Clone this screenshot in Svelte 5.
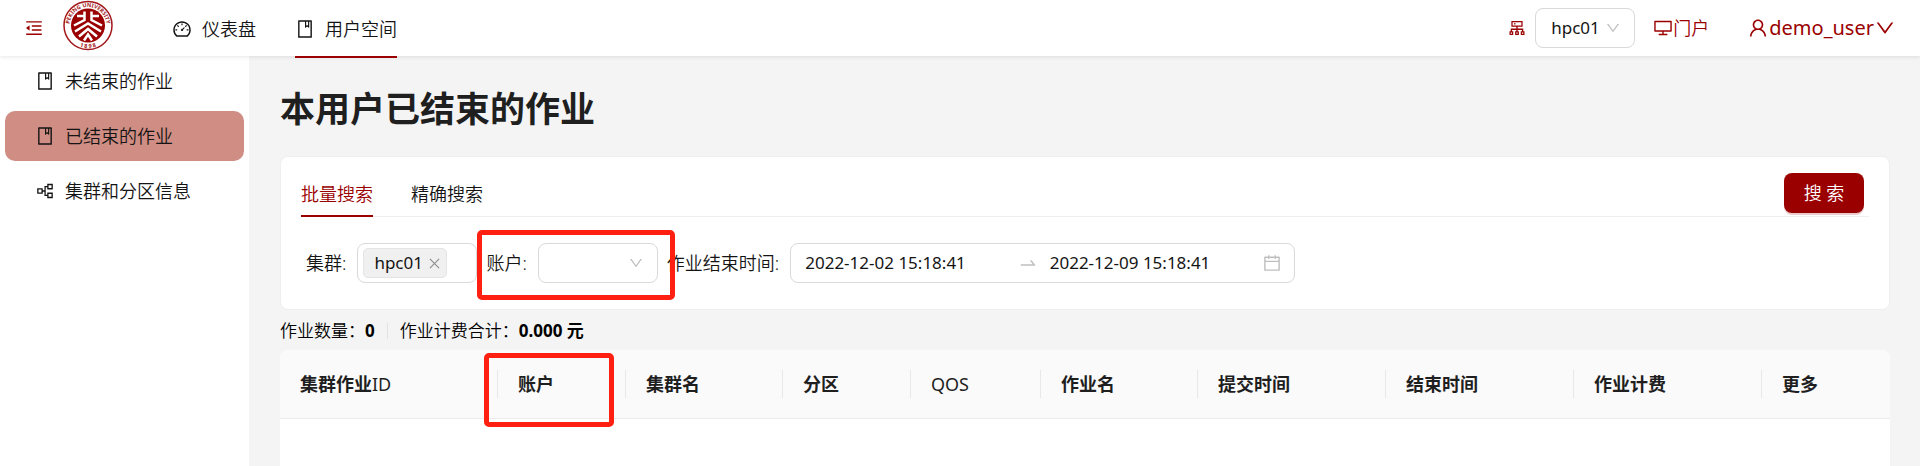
<script>
  const icons = {
    fold: 'M408 442h480c4.4 0 8-3.6 8-8v-56c0-4.4-3.6-8-8-8H408c-4.4 0-8 3.6-8 8v56c0 4.4 3.6 8 8 8zm-8 204c0 4.4 3.6 8 8 8h480c4.4 0 8-3.6 8-8v-56c0-4.4-3.6-8-8-8H408c-4.4 0-8 3.6-8 8v56zm504-486H120c-4.4 0-8 3.6-8 8v56c0 4.4 3.6 8 8 8h784c4.4 0 8-3.6 8-8v-56c0-4.4-3.6-8-8-8zm0 632H120c-4.4 0-8 3.6-8 8v56c0 4.4 3.6 8 8 8h784c4.4 0 8-3.6 8-8v-56c0-4.4-3.6-8-8-8zM115.4 518.9L271.7 642c5.8 4.6 14.4.5 14.4-6.9V388.9c0-7.4-8.5-11.5-14.4-6.9L115.4 505.1a8.74 8.74 0 000 13.8z',
    dashboard: 'M924.8 385.6a446.7 446.7 0 00-96-142.4 446.7 446.7 0 00-142.4-96C631.1 123.8 572.5 112 512 112s-119.1 11.8-174.4 35.2a446.7 446.7 0 00-142.4 96 446.7 446.7 0 00-96 142.4C75.8 440.9 64 499.5 64 560c0 132.7 58.3 257.7 159.9 343.1l1.7 1.4c5.8 4.8 13.1 7.5 20.6 7.5h531.7c7.5 0 14.8-2.7 20.6-7.5l1.7-1.4C901.7 817.7 960 692.7 960 560c0-60.5-11.9-119.1-35.2-174.4zM761.4 836H262.6A371.12 371.12 0 01140 560c0-99.4 38.7-192.8 109-263 70.3-70.3 163.7-109 263-109 99.4 0 192.8 38.7 263 109 70.3 70.3 109 163.7 109 263 0 105.6-44.5 205.5-122.6 276zM623.5 421.5a8.03 8.03 0 00-11.3 0L527.7 506c-18.7-5-39.4-.2-54.1 14.5a55.95 55.95 0 000 79.2 55.95 55.95 0 0079.2 0 55.87 55.87 0 0014.5-54.1l84.5-84.5c3.1-3.1 3.1-8.2 0-11.3l-28.3-28.3zM490 320h44c4.4 0 8-3.6 8-8v-80c0-4.4-3.6-8-8-8h-44c-4.4 0-8 3.6-8 8v80c0 4.4 3.6 8 8 8zm260 218v44c0 4.4 3.6 8 8 8h80c4.4 0 8-3.6 8-8v-44c0-4.4-3.6-8-8-8h-80c-4.4 0-8 3.6-8 8zm12.7-197.2l-31.1-31.1a8.03 8.03 0 00-11.3 0l-56.6 56.6a8.03 8.03 0 000 11.3l31.1 31.1c3.1 3.1 8.2 3.1 11.3 0l56.6-56.6c3.1-3.1 3.1-8.2 0-11.3zm-458.6-31.1a8.03 8.03 0 00-11.3 0l-31.1 31.1a8.03 8.03 0 000 11.3l56.6 56.6c3.1 3.1 8.2 3.1 11.3 0l31.1-31.1c3.1-3.1 3.1-8.2 0-11.3l-56.6-56.6zM262 530h-80c-4.4 0-8 3.6-8 8v44c0 4.4 3.6 8 8 8h80c4.4 0 8-3.6 8-8v-44c0-4.4-3.6-8-8-8z',
    book: 'M832 64H192c-17.7 0-32 14.3-32 32v832c0 17.7 14.3 32 32 32h640c17.7 0 32-14.3 32-32V96c0-17.7-14.3-32-32-32zm-260 72h96v209.9L621.5 312 572 347.4V136zm220 752H232V136h280v296.9c0 3.3 1 6.6 3 9.3a15.9 15.9 0 0022.3 3.7l83.8-59.9 81.4 59.4c2.7 2 6 3.1 9.4 3.1 8.8 0 16-7.2 16-16V136h64v752z',
    partition: 'M640.6 429.8h257.1c7.9 0 14.3-6.4 14.3-14.3V158.3c0-7.9-6.4-14.3-14.3-14.3H640.6c-7.9 0-14.3 6.4-14.3 14.3v92.9H490.6c-3.9 0-7.1 3.2-7.1 7.1v221.5h-85.7v-96.5c0-7.9-6.4-14.3-14.3-14.3H126.3c-7.9 0-14.3 6.4-14.3 14.3v257.2c0 7.9 6.4 14.3 14.3 14.3h257.1c7.9 0 14.3-6.4 14.3-14.3V544h85.7v221.5c0 3.9 3.2 7.1 7.1 7.1h135.7v92.9c0 7.9 6.4 14.3 14.3 14.3h257.1c7.9 0 14.3-6.4 14.3-14.3v-257c0-7.9-6.4-14.3-14.3-14.3h-257c-7.9 0-14.3 6.4-14.3 14.3v100h-78.6v-393h78.6v100c0 7.9 6.4 14.3 14.3 14.3zm53.5-217.9h150V362h-150V211.9zM329.9 587h-150V437h150v150zm364.2 75.1h150v150.1h-150V662.1z',
    cluster: 'M888 680h-54V540H546v-92h238c8.8 0 16-7.2 16-16V168c0-8.8-7.2-16-16-16H240c-8.8 0-16 7.2-16 16v264c0 8.8 7.2 16 16 16h238v92H190v140h-54c-4.4 0-8 3.6-8 8v176c0 4.4 3.6 8 8 8h176c4.4 0 8-3.6 8-8V688c0-4.4-3.6-8-8-8h-54v-72h220v72h-54c-4.4 0-8 3.6-8 8v176c0 4.4 3.6 8 8 8h176c4.4 0 8-3.6 8-8V688c0-4.4-3.6-8-8-8h-54v-72h220v72h-54c-4.4 0-8 3.6-8 8v176c0 4.4 3.6 8 8 8h176c4.4 0 8-3.6 8-8V688c0-4.4-3.6-8-8-8zM256 805.3c0 1.5-1.2 2.7-2.7 2.7h-58.7c-1.5 0-2.7-1.2-2.7-2.7v-58.7c0-1.5 1.2-2.7 2.7-2.7h58.7c1.5 0 2.7 1.2 2.7 2.7v58.7zm288 0c0 1.5-1.2 2.7-2.7 2.7h-58.7c-1.5 0-2.7-1.2-2.7-2.7v-58.7c0-1.5 1.2-2.7 2.7-2.7h58.7c1.5 0 2.7 1.2 2.7 2.7v58.7zM288 384V216h448v168H288zm544 421.3c0 1.5-1.2 2.7-2.7 2.7h-58.7c-1.5 0-2.7-1.2-2.7-2.7v-58.7c0-1.5 1.2-2.7 2.7-2.7h58.7c1.5 0 2.7 1.2 2.7 2.7v58.7zM360 300a40 40 0 1080 0 40 40 0 10-80 0z',
    desktop: 'M928 140H96c-17.7 0-32 14.3-32 32v496c0 17.7 14.3 32 32 32h380v112H304c-8.8 0-16 7.2-16 16v48c0 4.4 3.6 8 8 8h432c4.4 0 8-3.6 8-8v-48c0-8.8-7.2-16-16-16H548V700h380c17.7 0 32-14.3 32-32V172c0-17.7-14.3-32-32-32zm-40 488H136V212h752v416z',
    user: 'M858.5 763.6a374 374 0 00-80.6-119.5 375.63 375.63 0 00-119.5-80.6c-.4-.2-.8-.3-1.2-.5C719.5 518 760 444.7 760 362c0-137-111-248-248-248S264 225 264 362c0 82.7 40.5 156 102.8 201.1-.4.2-.8.3-1.2.5-44.8 18.9-85 46-119.5 80.6a375.63 375.63 0 00-80.6 119.5A371.7 371.7 0 00136 901.8a8 8 0 008 8.2h60c4.4 0 7.9-3.5 8-7.8 2-77.2 33-149.5 87.8-204.3 56.7-56.7 132-87.9 212.2-87.9s155.5 31.2 212.2 87.9C779 752.7 810 825 812 902.2c.1 4.4 3.6 7.8 8 7.8h60a8 8 0 008-8.2c-1-47.8-10.9-94.3-29.5-138.2zM512 534c-45.9 0-89.1-17.9-121.6-50.4S340 407.9 340 362c0-45.9 17.9-89.1 50.4-121.6S466.1 190 512 190s89.1 17.9 121.6 50.4S684 316.1 684 362c0 45.9-17.9 89.1-50.4 121.6S557.9 534 512 534z',
    down: 'M884 256h-75c-5.1 0-9.9 2.5-12.9 6.6L512 654.2 227.9 262.6c-3-4.1-7.8-6.6-12.9-6.6h-75c-6.5 0-10.3 7.4-6.5 12.7l352.6 486.1c12.8 17.6 39 17.6 51.7 0l352.6-486.1c3.9-5.3.1-12.7-6.4-12.7z',
    arrow: 'M873.1 596.2l-164-208A32 32 0 00684 376h-64.8c-6.7 0-10.4 7.7-6.3 13l144.3 183H152c-4.4 0-8 3.6-8 8v60c0 4.4 3.6 8 8 8h695.9c26.8 0 41.7-30.8 25.2-51.8z',
    calendar: 'M880 184H712v-64c0-4.4-3.6-8-8-8h-56c-4.4 0-8 3.6-8 8v64H384v-64c0-4.4-3.6-8-8-8h-56c-4.4 0-8 3.6-8 8v64H144c-17.7 0-32 14.3-32 32v664c0 17.7 14.3 32 32 32h736c17.7 0 32-14.3 32-32V216c0-17.7-14.3-32-32-32zm-40 656H184V460h656v380zM184 392V256h128v48c0 4.4 3.6 8 8 8h56c4.4 0 8-3.6 8-8v-48h256v48c0 4.4 3.6 8 8 8h56c4.4 0 8-3.6 8-8v-48h128v136H184z'
  };

  const sideItems = [
    { label: '未结束的作业', icon: 'book' },
    { label: '已结束的作业', icon: 'book', active: true },
    { label: '集群和分区信息', icon: 'partition' }
  ];

  const columns = [
    { title: '集群作业ID', width: 218 },
    { title: '账户', width: 128, marked: true },
    { title: '集群名', width: 157 },
    { title: '分区', width: 128 },
    { title: 'QOS', width: 130 },
    { title: '作业名', width: 157 },
    { title: '提交时间', width: 188 },
    { title: '结束时间', width: 188 },
    { title: '作业计费', width: 188 },
    { title: '更多', width: 128 }
  ];
  const total = columns.reduce((sum, c) => sum + c.width, 0);

  let clusters = $state(['hpc01']);
  let tab = $state('批量搜索');
  let start = $state('2022-12-02 15:18:41');
  let end = $state('2022-12-09 15:18:41');
</script>

{#snippet icon(name)}
  <svg class="icon" viewBox="0 0 1024 1024" aria-hidden="true"><path d={icons[name]} /></svg>
{/snippet}

<div class="page">
  <header>
    <button class="fold" aria-label="fold">{@render icon('fold')}</button>
    <a class="logo" href="#home" aria-label="home">
      <svg viewBox="0 0 100 100">
        <circle cx="50" cy="50" r="48" fill="#fff" stroke="#a3171b" stroke-width="3" />
        <circle cx="50" cy="50" r="34" fill="#9b0000" />
        <path id="arc" d="M19.4 70.7A37 37 0 1 1 80.6 70.7" fill="none" />
        <text font-size="11" font-weight="700" fill="#a3171b">
          <textPath href="#arc" startOffset="50%" text-anchor="middle">PEKING UNIVERSITY</textPath>
        </text>
        <path id="arc-low" d="M25 87.4A45 45 0 0 0 75 87.4" fill="none" />
        <text font-size="11" font-weight="700" fill="#a3171b">
          <textPath href="#arc-low" startOffset="50%" text-anchor="middle">1 8 9 8</textPath>
        </text>
        <g fill="none" stroke="#fff" stroke-width="5">
          <path d="M43 22V39L22 50M43 31H28M57 22V39L78 50M57 31H72" />
          <path d="M24 62L50 46L76 62M32 72L50 57L68 72M42 80L50 68L58 80" />
        </g>
      </svg>
    </a>
    <nav class="top-nav">
      <a href="#dashboard">{@render icon('dashboard')}仪表盘</a>
      <a href="#user" class="current">{@render icon('book')}用户空间</a>
    </nav>
    <div class="tools">
      <span class="cluster-icon">{@render icon('cluster')}</span>
      <div class="select header-select">
        <select aria-label="cluster"><option>hpc01</option></select>
        {@render icon('down')}
      </div>
      <a class="portal" href="#portal">{@render icon('desktop')}门户</a>
      <button class="account">{@render icon('user')}demo_user{@render icon('down')}</button>
    </div>
  </header>

  <div class="body">
    <aside>
      {#each sideItems as item}
        <a href="#jobs" class:active={item.active}>{@render icon(item.icon)}{item.label}</a>
      {/each}
    </aside>

    <main>
      <h1>本用户已结束的作业</h1>

      <section class="card">
        <div class="tabs">
          {#each ['批量搜索', '精确搜索'] as name}
            <button class="tab" class:chosen={tab === name} onclick={() => (tab = name)}>{name}</button>
          {/each}
          <button class="search">搜 索</button>
        </div>

        <form>
          <div class="field">
            <label for="clusters">集群:</label>
            <div class="box multi">
              {#each clusters as c}
                <span class="tag">
                  {c}
                  <button type="button" aria-label="remove" onclick={() => (clusters = [])}>
                    <svg viewBox="0 0 12 12"><path d="M1 1L11 11M11 1L1 11" /></svg>
                  </button>
                </span>
              {/each}
              <input id="clusters" />
            </div>
          </div>
          <div class="field">
            <label for="account">账户:</label>
            <div class="select">
              <select id="account"><option></option></select>
              {@render icon('down')}
            </div>
            <div class="mark mark-field"></div>
          </div>
          <div class="field">
            <label for="start">作业结束时间:</label>
            <div class="box range">
              <input id="start" bind:value={start} />
              {@render icon('arrow')}
              <input aria-label="end" bind:value={end} />
              {@render icon('calendar')}
            </div>
          </div>
        </form>
      </section>

      <div class="stats">
        <span>作业数量：<strong>0</strong></span>
        <span class="divider"></span>
        <span>作业计费合计：<strong>0.000 元</strong></span>
      </div>

      <div class="table-wrap">
        <table>
          <colgroup>
            {#each columns as c}<col style="width: {(c.width / total) * 100}%" />{/each}
          </colgroup>
          <thead>
            <tr>
              {#each columns as c}
                <th class:latin={c.title === 'QOS'}>
                  {#if c.title.endsWith('ID')}{c.title.slice(0, -2)}<span class="latin">ID</span>{:else}{c.title}{/if}
                  {#if c.marked}<div class="mark mark-column"></div>{/if}
                </th>
              {/each}
            </tr>
          </thead>
        </table>
      </div>
    </main>
  </div>
</div>

<style>
  :global(body) {
    margin: 0;
  }
  .page {
    display: flex;
    flex-direction: column;
    min-height: 100vh;
    background: #f4f4f4;
    color: #141414;
    font-family: 'Noto Sans', 'Noto Sans CJK SC', sans-serif;
    font-size: 18px;
    font-weight: 350;
    line-height: 28px;
  }
  .page *,
  .page *::before,
  .page *::after {
    box-sizing: border-box;
  }
  button,
  input,
  select {
    margin: 0;
    padding: 0;
    border: 0;
    background: none;
    color: inherit;
    font: inherit;
  }
  button {
    cursor: pointer;
  }
  a {
    color: inherit;
    text-decoration: none;
  }
  .icon {
    flex: none;
    width: 20px;
    height: 20px;
    fill: currentColor;
  }

  header {
    position: relative;
    display: flex;
    align-items: center;
    height: 56px;
    padding: 0 24px;
    background: #fff;
    box-shadow: 0 1px 4px rgba(0, 0, 0, 0.1);
  }
  .fold,
  .cluster-icon {
    display: flex;
    color: #9b0000;
  }
  .logo {
    display: flex;
    margin-left: 19px;
    align-self: flex-start;
  }
  .logo svg {
    width: 50px;
    height: 51px;
  }
  .top-nav {
    display: flex;
    align-self: stretch;
    gap: 39px;
    margin-left: 59px;
  }
  .top-nav a {
    display: flex;
    align-items: center;
    gap: 10px;
    height: 58px;
    padding-top: 2px;
    border-bottom: 2px solid transparent;
  }
  .top-nav .current {
    border-color: #9b0000;
  }
  .tools {
    display: flex;
    align-items: center;
    margin-left: auto;
    font-size: 17px;
  }
  .cluster-icon {
    margin-right: 8px;
  }
  .portal {
    display: flex;
    align-items: center;
    margin-left: 18px;
    color: #9b0000;
    font-size: 18px;
  }
  .account {
    display: flex;
    align-items: center;
    margin-left: 38px;
    color: #9b0000;
    font-size: 20px;
    font-weight: 400;
  }
  .account .icon {
    width: 22px;
    height: 22px;
  }

  .body {
    display: flex;
    flex: 1;
  }
  aside {
    display: flex;
    flex: none;
    flex-direction: column;
    gap: 5px;
    width: 249px;
    padding: 0 5px;
    background: #fff;
  }
  aside a {
    display: flex;
    align-items: center;
    gap: 10px;
    height: 50px;
    padding: 0 30px;
    border-radius: 10px;
  }
  aside .active {
    background: #cf8d83;
  }

  main {
    display: flex;
    flex: 1;
    flex-direction: column;
    min-width: 0;
    padding: 0 30px 0 31px;
  }
  h1 {
    margin: 29px 0 23px;
    color: #1f1f1f;
    font-size: 35px;
    line-height: 48px;
    font-weight: 700;
  }
  .card {
    padding: 16px 20px 26px;
    border: 1px solid #efefef;
    border-radius: 8px;
    background: #fff;
  }
  .tabs {
    display: flex;
    align-items: flex-start;
    gap: 38px;
    height: 44px;
    border-bottom: 1px solid #efefef;
  }
  .tab {
    height: 44px;
    padding-bottom: 1px;
    border-bottom: 2px solid transparent;
  }
  .chosen {
    border-color: #9b0000;
    color: #9b0000;
  }
  .search {
    width: 80px;
    height: 40px;
    margin: 0 5px 0 auto;
    border-radius: 8px;
    background: #9b0000;
    box-shadow: 0 2px 0 rgba(155, 0, 0, 0.2);
    color: #fff;
  }

  form {
    display: flex;
    gap: 9px;
    margin-top: 26px;
    padding-left: 5px;
    font-size: 17px;
  }
  .field {
    position: relative;
    display: flex;
    align-items: center;
    gap: 11px;
  }
  .field label {
    font-size: 18px;
  }
  .box,
  .select {
    display: flex;
    align-items: center;
    height: 40px;
    border: 1px solid #d9d9d9;
    border-radius: 8px;
    background: #fff;
    font-weight: 400;
  }
  .select {
    position: relative;
    width: 120px;
  }
  .header-select {
    width: 100px;
  }
  .select select {
    width: 100%;
    height: 100%;
    padding: 0 15px;
    appearance: none;
  }
  .select .icon {
    position: absolute;
    right: 13px;
    width: 16px;
    height: 16px;
    color: #bfbfbf;
    pointer-events: none;
  }
  .multi {
    width: 120px;
    padding: 0 5px;
  }
  .multi input {
    flex: 1;
    min-width: 0;
    width: 0;
  }
  .tag {
    display: flex;
    align-items: center;
    gap: 6px;
    height: 30px;
    padding: 0 6px 0 10px;
    border: 1px solid #e4e4e4;
    border-radius: 5px;
    background: #f0f0f0;
  }
  .tag button,
  .tag svg {
    display: block;
    width: 11px;
    height: 11px;
  }
  .tag path {
    stroke: #8c8c8c;
    stroke-width: 1.2;
  }
  .range {
    width: 505px;
    padding: 0 12px 0 14px;
  }
  .range input {
    flex: 1;
    min-width: 0;
  }
  .range .icon {
    color: #bfbfbf;
  }
  .range input + .icon {
    margin-right: 12px;
  }
  .range .icon:last-child {
    margin-right: 0;
  }

  .stats {
    display: flex;
    align-items: center;
    gap: 12px;
    padding: 7px 0 5px;
    color: #000;
    font-size: 17px;
  }
  strong {
    font-weight: 700;
  }
  .divider {
    width: 1px;
    height: 16px;
    background: #e3e3e3;
  }

  .table-wrap {
    flex: 1;
    border-radius: 8px 8px 0 0;
    background: #fff;
  }
  table {
    width: 100%;
    border-spacing: 0;
    table-layout: fixed;
  }
  th {
    position: relative;
    height: 69px;
    padding: 0 20px;
    border-bottom: 1px solid #ebebeb;
    background: #fafafa;
    color: #1f1f1f;
    font-weight: 700;
    text-align: left;
    white-space: nowrap;
  }
  th:first-child {
    border-top-left-radius: 8px;
  }
  th:last-child {
    border-top-right-radius: 8px;
  }
  th:not(:last-child)::after {
    position: absolute;
    top: 20px;
    right: 0;
    width: 1px;
    height: 28px;
    background: #e8e8e8;
    content: '';
  }
  .latin {
    font-weight: 400;
  }
  .mark {
    position: absolute;
    z-index: 1;
    border: 5px solid #ff2011;
    border-radius: 5px;
    pointer-events: none;
  }
  .mark-field {
    inset: -13px -17px -17px -9px;
  }
  .mark-column {
    inset: 3px 12px -9px -14px;
  }
</style>
